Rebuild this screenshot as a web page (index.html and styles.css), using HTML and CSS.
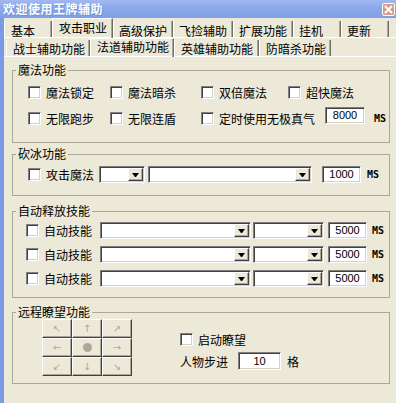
FILE: index.html
```html
<!DOCTYPE html>
<html lang="zh-CN">
<head>
    <meta charset="UTF-8">
    <title>欢迎使用王牌辅助</title>
    <link rel="stylesheet" href="styles.css">
</head>
<body>
    <div class="titlebar">
        <span class="title">欢迎使用王牌辅助</span>
        <span class="close">
            <svg width="9" height="9" viewBox="0 0 9 9"><path d="M1 1 L8 8 M8 1 L1 8" stroke="#fff" stroke-width="2"/></svg>
        </span>
    </div>

    <div class="window">
        <!-- top level tabs -->
        <div class="tabs main-tabs">
            <div class="tab t-basic">基本</div>
            <div class="tab active t-attack">攻击职业</div>
            <div class="tab t-wide">高级保护</div>
            <div class="tab t-wide">飞捡辅助</div>
            <div class="tab t-wide">扩展功能</div>
            <div class="tab t-short">挂机</div>
            <div class="tab t-short">更新</div>
        </div>

        <!-- class tabs -->
        <div class="tabs sub-tabs">
            <div class="tab t-sub">战士辅助功能</div>
            <div class="tab active t-sub">法道辅助功能</div>
            <div class="tab t-hero">英雄辅助功能</div>
            <div class="tab t-guard">防暗杀功能</div>
        </div>

        <div class="content">
            <fieldset class="group g1">
                <legend>魔法功能</legend>
                <div class="inner">
                    <div class="row">
                        <label class="check c1"><span class="cb"></span>魔法锁定</label>
                        <label class="check c2"><span class="cb"></span>魔法暗杀</label>
                        <label class="check c3"><span class="cb"></span>双倍魔法</label>
                        <label class="check"><span class="cb"></span>超快魔法</label>
                    </div>
                    <div class="row">
                        <label class="check c1"><span class="cb"></span>无限跑步</label>
                        <label class="check c2"><span class="cb"></span>无限连盾</label>
                        <label class="check"><span class="cb"></span>定时使用无极真气</label>
                        <span class="num num-timer">8000</span>
                        <span class="ms ms-timer">MS</span>
                    </div>
                </div>
            </fieldset>

            <fieldset class="group g2">
                <legend>砍冰功能</legend>
                <div class="inner">
                    <div class="row">
                        <label class="check"><span class="cb"></span>攻击魔法</label>
                        <span class="combo combo-key"><span class="arrow"></span></span>
                        <span class="combo combo-spell"><span class="arrow"></span></span>
                        <span class="num num-ice">1000</span>
                        <span class="ms ms-ice">MS</span>
                    </div>
                </div>
            </fieldset>

            <fieldset class="group g3">
                <legend>自动释放技能</legend>
                <div class="inner">
                    <div class="row">
                        <label class="check"><span class="cb"></span>自动技能</label>
                        <span class="combo combo-skill"><span class="arrow"></span></span>
                        <span class="combo combo-target"><span class="arrow"></span></span>
                        <span class="num num-auto">5000</span>
                        <span class="ms ms-auto">MS</span>
                    </div>
                    <div class="row">
                        <label class="check"><span class="cb"></span>自动技能</label>
                        <span class="combo combo-skill"><span class="arrow"></span></span>
                        <span class="combo combo-target"><span class="arrow"></span></span>
                        <span class="num num-auto">5000</span>
                        <span class="ms ms-auto">MS</span>
                    </div>
                    <div class="row">
                        <label class="check"><span class="cb"></span>自动技能</label>
                        <span class="combo combo-skill"><span class="arrow"></span></span>
                        <span class="combo combo-target"><span class="arrow"></span></span>
                        <span class="num num-auto">5000</span>
                        <span class="ms ms-auto">MS</span>
                    </div>
                </div>
            </fieldset>

            <fieldset class="group g4">
                <legend>远程瞭望功能</legend>
                <div class="inner">
                    <div class="pad">
                        <span>↖</span><span>↑</span><span>↗</span>
                        <span>←</span><span><i class="dot"></i></span><span>→</span>
                        <span>↙</span><span>↓</span><span>↘</span>
                    </div>
                    <div class="scout">
                        <label class="check"><span class="cb"></span>启动瞭望</label>
                        <div class="step">
                            人物步进
                            <span class="num num-step">10</span>
                            <span class="unit">格</span>
                        </div>
                    </div>
                </div>
            </fieldset>
        </div>
    </div>
</body>
</html>
```

FILE: styles.css
```css
body {
    margin: 0;
    width: 396px;
    height: 403px;
    overflow: hidden;
    background-color: #ece9d8; /* XP dialog beige */
    color: #000;
    font-family: "Noto Sans CJK SC", sans-serif;
    font-size: 12px;
}

/* title bar */
.titlebar {
    height: 18px;
    display: flex;
    align-items: center;
    justify-content: space-between;
    padding: 0 1px 0 3px;
    background: linear-gradient(#a2b9f0, #8ca8ea 45%, #819fe5);
}
.title {
    color: #fff;
    font-weight: bold;
    letter-spacing: 0.5px;
    line-height: 18px;
    text-shadow: 1px 1px 0 #7390d8;
}
.close {
    box-sizing: border-box;
    width: 13px;
    height: 13px;
    display: flex;
    align-items: center;
    justify-content: center;
    border: 1px solid #fff;
    border-radius: 2px;
    background-color: #d99a8c;
}
.close svg {
    display: block;
}

.window {
    height: 385px;
    border-left: 4px solid #7b9ae3;
}

/* tabs */
.tabs {
    display: flex;
    align-items: flex-end;
    border-bottom: 1px solid #fff;
}
.main-tabs {
    height: 19px;
}
.sub-tabs {
    height: 18px;
    padding-left: 2px;
}
.tab {
    box-sizing: border-box;
    height: 16px;
    padding: 3px 0 0 5px;
    line-height: 13px;
    white-space: nowrap;
    border-left: 1px solid #fff;
    border-right: 1px solid #716f64;
    box-shadow: inset -1px 0 #aca899;
}
.main-tabs .tab.active {
    height: 20px;
    margin-bottom: -1px;
    padding-top: 2px;
    border-top: 1px solid #fff;
}
.sub-tabs .tab {
    padding-top: 2px;
    padding-left: 6px;
}
.sub-tabs .tab.active {
    height: 19px;
    margin-bottom: -1px;
    padding-top: 1px;
    border-top: 1px solid #fff;
}
.t-basic { width: 48px; padding-left: 6px; }
.t-attack { width: 61px; padding-left: 6px; }
.t-wide { width: 60px; }
.t-short { width: 48px; }
.t-sub { width: 84px; }
.t-hero { width: 85px; }
.t-guard { width: 72px; }

/* group boxes */
.content {
    display: flex;
    flex-direction: column;
    padding: 7px 6px 0 8px;
}
.group {
    margin: 0;
    padding: 0;
    min-width: 0;
    border: 1px solid #aca899;
}
.group legend {
    margin-left: 3px;
    padding: 0 2px;
    line-height: 12px;
}
.g2 { margin-top: 5px; }
.g3 { margin-top: 9px; }
.g4 { margin-top: 8px; }

.g1 .inner {
    display: flex;
    flex-direction: column;
    gap: 9px;
    padding: 8px 0 15px 15px;
}
.g2 .inner {
    padding: 6px 0 12px 15px;
}
.g3 .inner {
    display: flex;
    flex-direction: column;
    gap: 7px;
    padding: 5px 0 10px 13px;
}
.g4 .inner {
    display: flex;
    padding: 1px 0 7px 29px;
}

.row {
    display: flex;
    align-items: center;
    height: 17px;
    line-height: 13px;
}
.check {
    display: flex;
    align-items: center;
    flex: none;
    line-height: 13px;
}
.c1 { width: 82px; }
.c2 { width: 91px; }
.c3 { width: 87px; }

/* sunken controls */
.cb {
    box-sizing: border-box;
    width: 13px;
    height: 13px;
    margin-right: 5px;
    background-color: #fff;
    border: 1px solid;
    border-color: #808080 #fff #fff #808080;
    box-shadow: inset 1px 1px #404040, inset -1px -1px #d4d0c8;
}
.combo, .num {
    box-sizing: border-box;
    flex: none;
    height: 17px;
    background-color: #fff;
    border: 1px solid;
    border-color: #808080 #fff #fff #808080;
    box-shadow: inset 1px 1px #404040, inset -1px -1px #d4d0c8;
}
.combo {
    display: flex;
    align-items: center;
    justify-content: flex-end;
    padding-right: 1px;
}
.arrow {
    box-sizing: border-box;
    width: 15px;
    height: 13px;
    display: flex;
    align-items: center;
    justify-content: center;
    background-color: #ece9d8;
    border: 1px solid;
    border-color: #fff #404040 #404040 #fff;
    box-shadow: inset -1px -1px #aca899;
}
.arrow::after {
    content: "";
    width: 1px;
    border-top: 4px solid #000;
    border-left: 3px solid transparent;
    border-right: 3px solid transparent;
}
.num {
    font-family: "Liberation Sans", Arial, sans-serif;
    font-size: 11px;
    line-height: 15px;
    text-align: center;
}
.ms {
    font-family: "DejaVu Sans Mono", monospace;
    font-size: 10px;
    font-weight: bold;
}

/* magic row 2 */
.num-timer {
    width: 40px;
    margin-left: 10px;
    align-self: flex-start;
    margin-top: -3px;
}
.ms-timer { margin-left: 9px; }

/* ice row */
.combo-key { width: 46px; margin-left: 5px; }
.combo-spell { width: 164px; margin-left: 3px; }
.num-ice { width: 39px; margin-left: 10px; }
.ms-ice { margin-left: 6px; }

/* auto skill rows */
.combo-skill { width: 151px; margin-left: 8px; }
.combo-target { width: 71px; margin-left: 2px; }
.num-auto { width: 39px; margin-left: 4px; }
.ms-auto { margin-left: 5px; }

/* remote view */
.pad {
    display: grid;
    grid-template-columns: repeat(3, 30px);
    grid-auto-rows: 19px;
}
.pad span {
    box-sizing: border-box;
    display: flex;
    align-items: center;
    justify-content: center;
    border: 1px solid;
    border-color: #fff #404040 #404040 #fff;
    box-shadow: inset -1px -1px #aca899;
    color: #aca899;
    font-family: "DejaVu Sans", sans-serif;
    font-size: 10px;
}
.dot {
    width: 9px;
    height: 9px;
    border-radius: 50%;
    background-color: #aca899;
}
.scout {
    display: flex;
    flex-direction: column;
    gap: 6px;
    margin-left: 48px;
    padding-top: 14px;
}
.step {
    display: flex;
    align-items: center;
    height: 18px;
    line-height: 13px;
}
.num-step {
    width: 43px;
    height: 18px;
    margin-left: 10px;
    line-height: 16px;
}
.unit {
    margin-left: 6px;
}
```
